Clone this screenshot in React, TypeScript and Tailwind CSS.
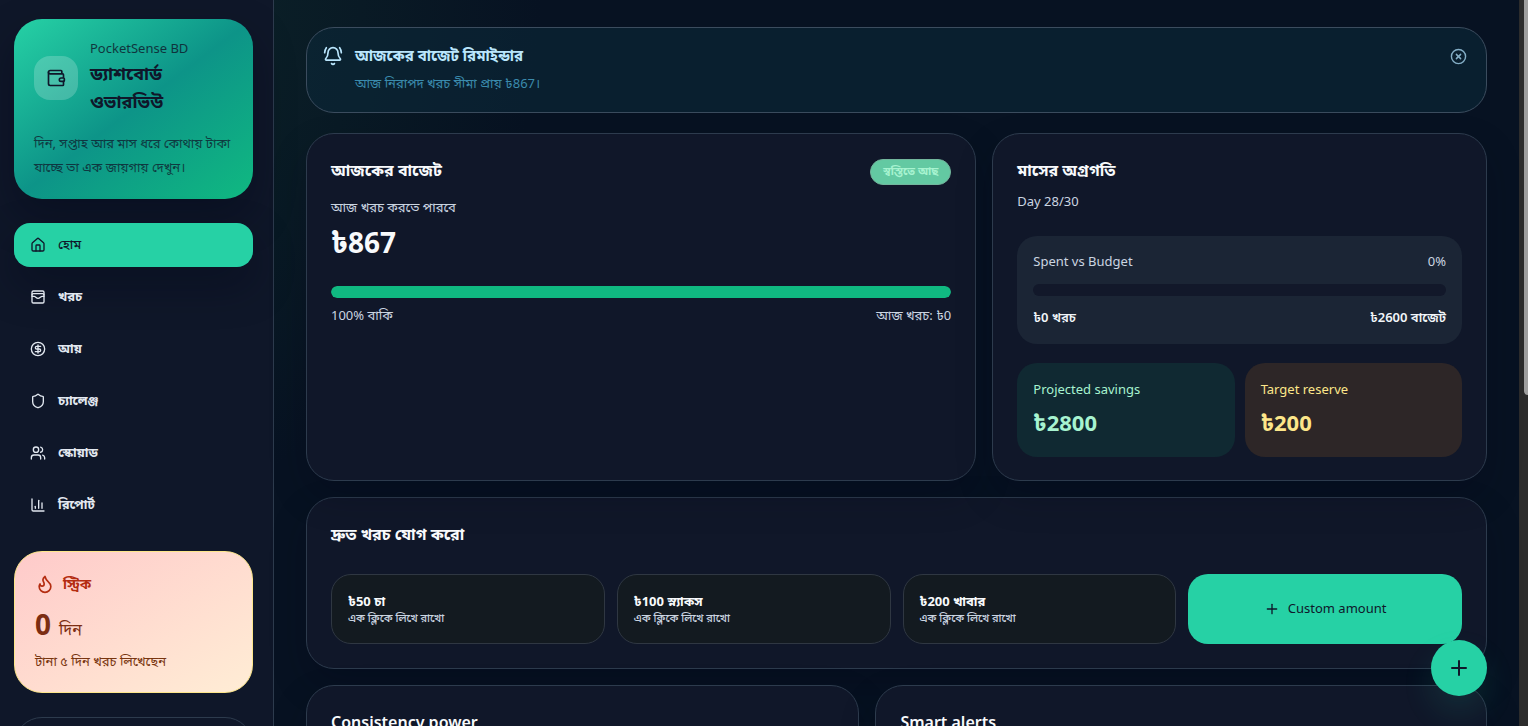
import type { ReactNode } from 'react';
import {
  BellRing,
  ChartColumn,
  CircleDollarSign,
  CircleX,
  Flame,
  House,
  Plus,
  Shield,
  Users,
  Wallet,
  WalletCards,
} from 'lucide-react';

const navItems = [
  { label: 'হোম', icon: House, active: true },
  { label: 'খরচ', icon: WalletCards, active: false },
  { label: 'আয়', icon: CircleDollarSign, active: false },
  { label: 'চ্যালেঞ্জ', icon: Shield, active: false },
  { label: 'স্কোয়াড', icon: Users, active: false },
  { label: 'রিপোর্ট', icon: ChartColumn, active: false },
];

const quickExpenses = [
  { amount: 50, label: 'চা' },
  { amount: 100, label: 'স্ন্যাকস' },
  { amount: 200, label: 'খাবার' },
];

function Panel({ children, className = '' }: { children: ReactNode; className?: string }) {
  return (
    <section
      className={`rounded-[28px] border border-[#2d3b4d] bg-[#101729] p-6 shadow-[0_16px_36px_rgba(2,6,23,0.22)] ${className}`}
    >
      {children}
    </section>
  );
}

function PanelTitle({ children, latin = false }: { children: ReactNode; latin?: boolean }) {
  return (
    <h2 className={`text-base leading-6 text-[#f8fafc] ${latin ? 'font-semibold' : 'font-bold'}`}>{children}</h2>
  );
}

function ProgressBar({ value, track, fill }: { value: number; track: string; fill: string }) {
  return (
    <div className={`h-3 overflow-hidden rounded-full ${track}`}>
      <div className={`h-full rounded-full ${fill}`} style={{ width: `${value}%` }} />
    </div>
  );
}

function Sidebar() {
  return (
    <aside className="flex w-[274px] shrink-0 flex-col gap-6 border-r border-[#2d3b4d] bg-[#0f1729] pt-[19px] pr-5 pl-3.5">
      <div className="h-[180px] shrink-0 rounded-[28px] bg-[linear-gradient(to_bottom_right,#26d1a5_0%,#0d9488_50%,#10b981_100%)] px-5 pt-[18px] text-[#0f172a] shadow-[0_18px_40px_rgba(2,6,23,0.35)]">
        <div className="flex items-center gap-3">
          <div className="flex size-11 shrink-0 items-center justify-center rounded-2xl bg-white/20">
            <Wallet className="size-5" />
          </div>
          <div className="pb-1">
            <p className="text-[13px] leading-[22px] opacity-80">PocketSense BD</p>
            <h1 className="text-lg leading-7 font-bold">ড্যাশবোর্ড ওভারভিউ</h1>
          </div>
        </div>
        <p className="mt-3 text-[13px] leading-6 opacity-75">দিন, সপ্তাহ আর মাস ধরে কোথায় টাকা যাচ্ছে তা এক জায়গায় দেখুন।</p>
      </div>

      <nav className="flex flex-col gap-2">
        {navItems.map(({ label, icon: Icon, active }) => (
          <a
            key={label}
            href="#"
            className={`flex h-11 items-center gap-3 rounded-2xl px-4 text-[13px] ${
              active
                ? 'bg-[#26d1a5] font-medium text-[#0f172a] shadow-[0_18px_40px_rgba(2,6,23,0.35)]'
                : 'font-bold text-[#e2e8f0]'
            }`}
          >
            <Icon className="size-4" />
            {label}
          </a>
        ))}
      </nav>

      <div className="h-[142px] shrink-0 rounded-[28px] border border-[#fde68a] bg-linear-to-br from-[#fecaca] to-[#ffedd5] px-5 pt-[18px]">
        <h2 className="flex items-center gap-2 text-sm leading-7 font-bold text-[#b42c10]">
          <Flame className="size-5" />
          স্ট্রিক
        </h2>
        <p className="mt-2 flex items-baseline gap-2 text-[#7c2d12]">
          <span className="text-[28px] leading-9 font-bold">0</span>
          <span className="text-base leading-7">দিন</span>
        </p>
        <p className="mt-1.5 text-[13px] leading-6 text-[#78350f]">টানা ৫ দিন খরচ লিখেছেন</p>
      </div>

      <div className="h-40 shrink-0 rounded-[28px] border border-[#2d3b4d]" />
    </aside>
  );
}

function Reminder() {
  return (
    <div className="flex h-[86px] gap-3 rounded-[28px] border border-[#3b4c5e] bg-[#0b2839]/60 px-4 pt-3.5">
      <BellRing className="mt-1 size-5 shrink-0 text-[#bae6fd]" />
      <div className="grow">
        <h2 className="text-[15px] leading-[26px] font-bold text-[#bae6fd]">আজকের বাজেট রিমাইন্ডার</h2>
        <p className="mt-px text-[13px] leading-7 text-[#3b8bad]">আজ নিরাপদ খরচ সীমা প্রায় ৳867।</p>
      </div>
      <button type="button" aria-label="Close" className="mt-0.5 flex size-6 items-center justify-center text-[#84aec6]">
        <CircleX className="size-[17px]" />
      </button>
    </div>
  );
}

function TodayBudget() {
  return (
    <Panel className="h-[348px]">
      <div className="flex items-start justify-between">
        <PanelTitle>আজকের বাজেট</PanelTitle>
        <span className="mt-px h-[26px] rounded-full border border-[#72b69c] bg-[#63c9a2] px-3 text-[11px] leading-[22px] font-bold text-[#a7f3d0]">
          স্বস্তিতে আছ
        </span>
      </div>
      <p className="mt-2.5 text-[13px] leading-6 text-[#cbd5e1]">আজ খরচ করতে পারবে</p>
      <p className="mt-[3px] text-[28px] leading-10 font-bold text-[#f8fafc]">৳867</p>
      <div className="mt-6">
        <ProgressBar value={100} track="bg-[#1e293b]" fill="bg-[#10b981]" />
      </div>
      <div className="mt-[5px] flex justify-between text-[13px] leading-6 text-[#cbd5e1]">
        <span>100% বাকি</span>
        <span>আজ খরচ: ৳0</span>
      </div>
    </Panel>
  );
}

function MonthProgress() {
  return (
    <Panel className="h-[348px]">
      <PanelTitle>মাসের অগ্রগতি</PanelTitle>
      <p className="mt-[7px] text-[13px] leading-6 text-[#cbd5e1]">Day 28/30</p>
      <div className="mt-[23px] h-[108px] rounded-[20px] bg-[#1b2535] px-4 pt-3">
        <div className="flex justify-between text-[13px] leading-[26px] text-[#cbd5e1]">
          <span>Spent vs Budget</span>
          <span>0%</span>
        </div>
        <div className="mt-2.5">
          <ProgressBar value={0} track="bg-[#12182a]" fill="bg-[#10b981]" />
        </div>
        <div className="mt-2 flex justify-between text-[13px] leading-[26px] font-semibold text-[#f1f5f9]">
          <span>৳0 খরচ</span>
          <span>৳2600 বাজেট</span>
        </div>
      </div>
      <div className="mt-[19px] grid grid-cols-2 gap-2.5">
        <div className="h-[94px] rounded-[20px] bg-[#102932] px-4 pt-3.5 text-[#a7f3d0]">
          <p className="text-[13px] leading-6">Projected savings</p>
          <p className="mt-[5px] text-[22px] leading-8 font-bold">৳2800</p>
        </div>
        <div className="h-[94px] rounded-[20px] bg-[#2d2627] px-4 pt-3.5 text-[#fde68a]">
          <p className="text-[13px] leading-6">Target reserve</p>
          <p className="mt-[5px] text-[22px] leading-8 font-bold">৳200</p>
        </div>
      </div>
    </Panel>
  );
}

function QuickAdd() {
  return (
    <Panel className="h-[172px]">
      <PanelTitle>দ্রুত খরচ যোগ করো</PanelTitle>
      <div className="mt-7 grid grid-cols-4 gap-3">
        {quickExpenses.map((item) => (
          <button
            key={item.amount}
            type="button"
            className="flex h-[70px] flex-col justify-center rounded-[20px] border border-[#2f3742] bg-[#131a20] px-4 text-left"
          >
            <span className="text-[13px] leading-[18px] font-bold text-[#f8fafc]">
              ৳{item.amount} {item.label}
            </span>
            <span className="text-[11px] leading-4 font-medium text-[#cbd5e1]">এক ক্লিকে লিখে রাখো</span>
          </button>
        ))}
        <button
          type="button"
          className="flex h-[70px] items-center justify-center gap-2 rounded-[20px] bg-[#26d1a5] text-[13px] text-[#0f172a]"
        >
          <Plus className="size-4" />
          Custom amount
        </button>
      </div>
    </Panel>
  );
}

export default function App() {
  return (
    <div className="flex h-screen overflow-hidden bg-[#071222] bg-[radial-gradient(circle_at_top_left,#0d2a2b_0%,#071222_32%)] font-['Noto_Sans','Noto_Sans_Bengali',sans-serif]">
      <Sidebar />
      <main className="relative min-w-0 grow px-8 pt-[27px]">
        <Reminder />
        <div className="mt-5 grid grid-cols-[1.355fr_1fr] gap-4">
          <TodayBudget />
          <MonthProgress />
        </div>
        <div className="mt-4">
          <QuickAdd />
        </div>
        <div className="mt-4 grid grid-cols-[0.95fr_1.05fr] gap-4">
          <Panel className="h-60">
            <PanelTitle latin>Consistency power</PanelTitle>
          </Panel>
          <Panel className="h-60">
            <PanelTitle latin>Smart alerts</PanelTitle>
          </Panel>
        </div>
        <button
          type="button"
          aria-label="Add"
          className="absolute right-8 bottom-[30px] flex size-14 items-center justify-center rounded-full bg-[#26d1a5] text-[#0f172a] shadow-[0_16px_32px_rgba(38,209,165,0.12)]"
        >
          <Plus className="size-6" />
        </button>
      </main>
      <div className="w-[9px] shrink-0 bg-[#2c2c2c] pl-[5px]">
        <div className="h-[395px] rounded-bl-sm bg-[#9f9f9f]" />
      </div>
    </div>
  );
}
